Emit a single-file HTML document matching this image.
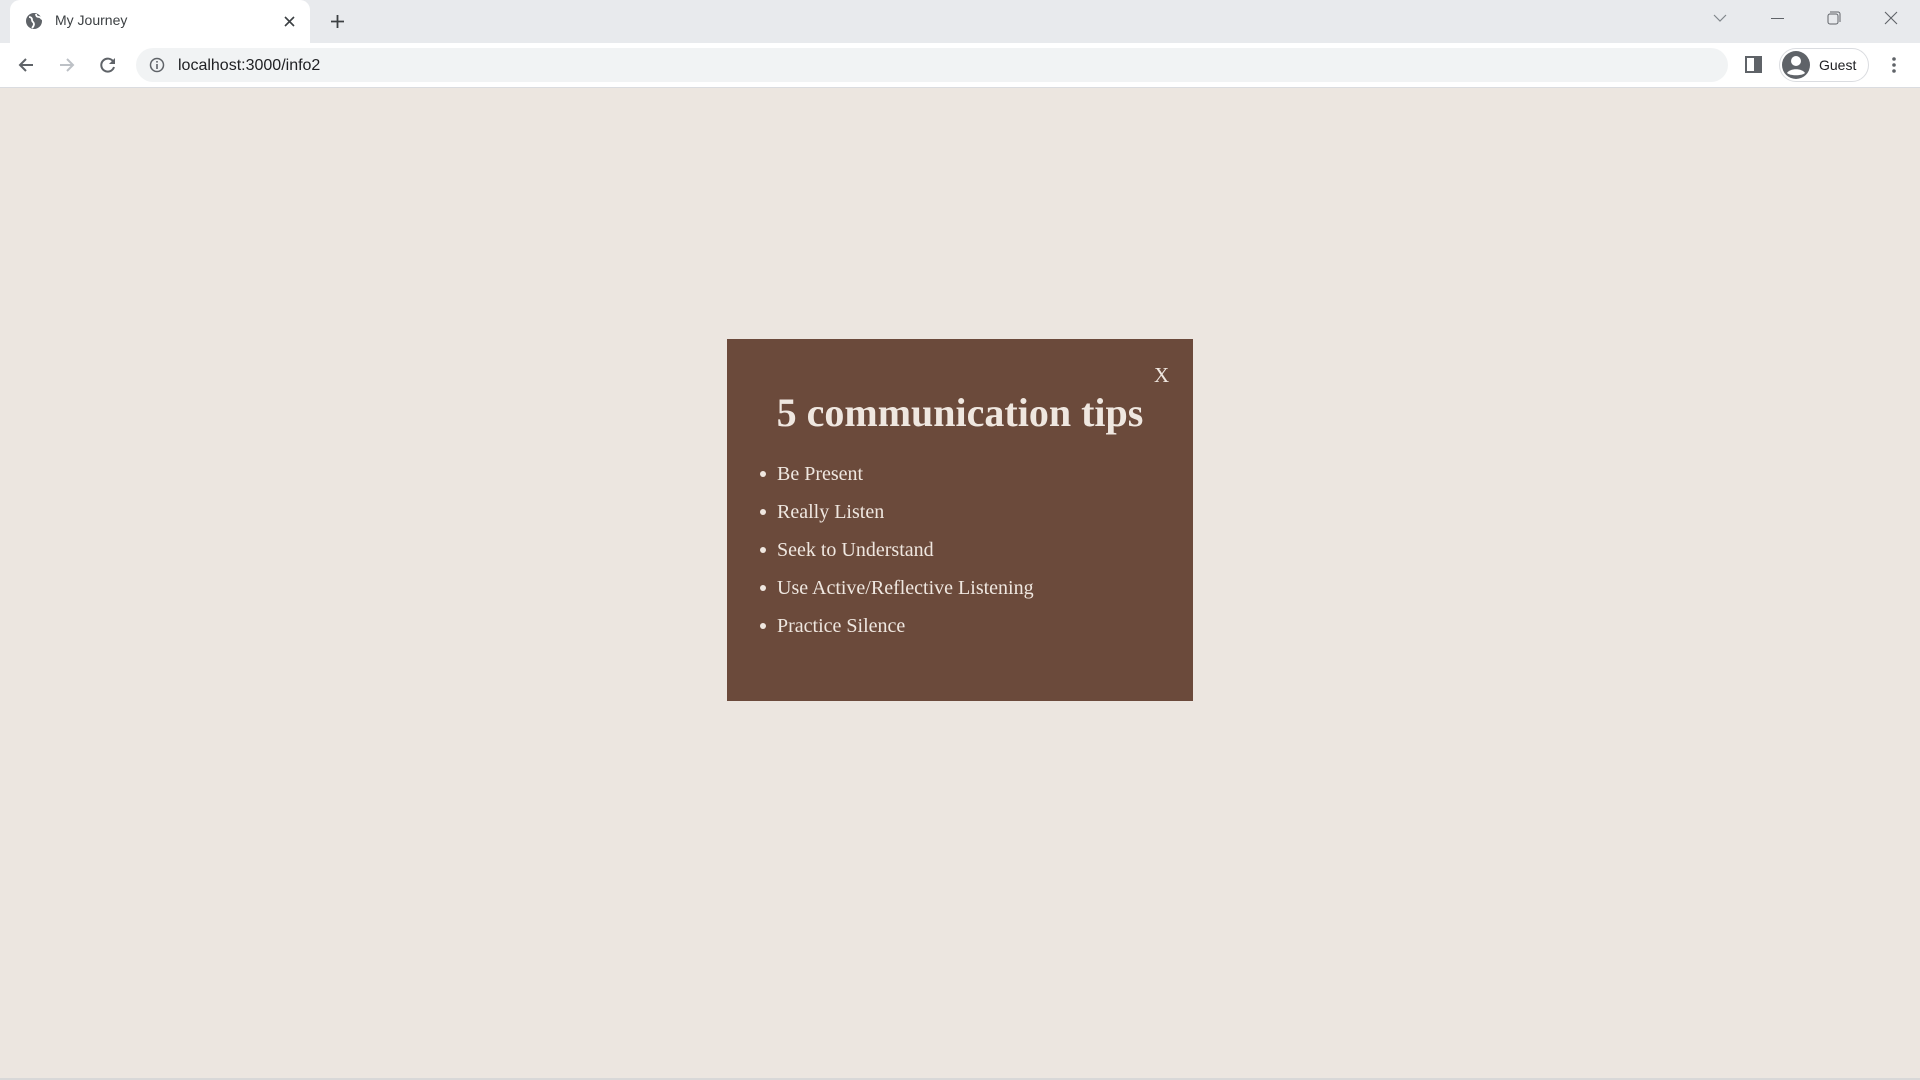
<!DOCTYPE html>
<html><head><meta charset="utf-8">
<style>
*{margin:0;padding:0;box-sizing:border-box}
html,body{width:1920px;height:1080px;overflow:hidden;background:#ece6e0;font-family:"Liberation Sans",sans-serif}
#tabbar{position:absolute;left:0;top:0;width:1920px;height:43px;background:#e8eaed}
#tab{position:absolute;left:10px;top:0;width:300px;height:43px;background:#fff;border-radius:10px 10px 0 0}
#tab .t{position:absolute;left:45px;top:12px;font-size:14px;color:#3c4043}
#toolbar{position:absolute;left:0;top:43px;width:1920px;height:45px;background:#fff;border-bottom:1px solid #dadce0}
#omni{position:absolute;left:136px;top:5px;width:1592px;height:34px;background:#f1f3f4;border-radius:17px}
#omni .u{position:absolute;left:42px;top:9px;font-size:16px;color:#202124}
#guest{position:absolute;left:1779px;top:5px;width:90px;height:34px;border:1px solid #dadce0;border-radius:17px}
#guest span{position:absolute;left:39px;top:8px;font-size:14px;color:#202124}
#bottom{position:absolute;left:0;top:1078px;width:1920px;height:2px;background:#d8d8d8}
#modal{position:absolute;left:727px;top:339px;width:466px;height:362px;background:#6b4a3b;color:#efe7e0;font-family:"Liberation Serif",serif}
#modal h1{position:absolute;left:0;width:466px;top:50px;text-align:center;font-size:40px;font-weight:bold;line-height:48px}
#close{position:absolute;left:427px;top:24px;font-size:21px}
#modal ul{position:absolute;left:50px;top:116px;list-style:none}
#modal li{font-size:20px;line-height:38px;position:relative}
#modal li:before{content:"";position:absolute;left:-17px;top:16px;width:6px;height:6px;border-radius:50%;background:#efe7e0}
</style></head><body>
<div id="tabbar">
 <div id="tab">
  <svg style="position:absolute;left:15px;top:12px" width="18" height="18" viewBox="0 0 18 18"><circle cx="9" cy="9" r="8" fill="#5f6368"/><path d="M4 5c2 0 3 1 3 3s2 2 2 4-1 3-2 4M11 2c0 2 1 3 3 3s2 2 3 2" stroke="#fff" stroke-width="1.8" fill="none"/></svg>
  <span class="t">My Journey</span>
  <svg style="position:absolute;left:274px;top:16px" width="11" height="11" viewBox="0 0 11 11"><path d="M1 1L10 10M10 1L1 10" stroke="#3c4043" stroke-width="1.6"/></svg>
 </div>
 <svg style="position:absolute;left:330px;top:14px" width="15" height="15" viewBox="0 0 15 15"><path d="M7.5 1V14M1 7.5H14" stroke="#3c4043" stroke-width="1.8"/></svg>
 <svg style="position:absolute;left:1713px;top:14px" width="14" height="8" viewBox="0 0 14 8"><path d="M1 1L7 7L13 1" stroke="#80868b" stroke-width="1.2" fill="none"/></svg>
 <div style="position:absolute;left:1771px;top:18px;width:13px;height:1px;background:#5f6368"></div>
 <svg style="position:absolute;left:1827px;top:11px" width="14" height="14" viewBox="0 0 14 14"><rect x="1" y="3" width="10" height="10" rx="2" stroke="#5f6368" fill="none"/><path d="M3 1H11a2 2 0 0 1 2 2V11" stroke="#5f6368" fill="none"/></svg>
 <svg style="position:absolute;left:1884px;top:11px" width="14" height="14" viewBox="0 0 14 14"><path d="M1 1L13 13M13 1L1 13" stroke="#5f6368" stroke-width="1.1"/></svg>
</div>
<div id="toolbar">
 <svg style="position:absolute;left:17px;top:13px" width="18" height="18" viewBox="0 0 18 18"><path d="M16 9H3M9 3L3 9L9 15" stroke="#5f6368" stroke-width="2" fill="none"/></svg>
 <svg style="position:absolute;left:58px;top:13px" width="18" height="18" viewBox="0 0 18 18"><path d="M2 9H15M9 3L15 9L9 15" stroke="#bdc1c6" stroke-width="2" fill="none"/></svg>
 <svg style="position:absolute;left:99px;top:13px" width="18" height="18" viewBox="0 0 18 18"><path d="M14.5 6A6.5 6.5 0 1 0 15 11" stroke="#5f6368" stroke-width="2" fill="none"/><path d="M16 2V8H10Z" fill="#5f6368"/></svg>
 <div id="omni">
  <svg style="position:absolute;left:13px;top:9px" width="16" height="16" viewBox="0 0 16 16"><circle cx="8" cy="8" r="6.5" stroke="#5f6368" stroke-width="1.5" fill="none"/><rect x="7.2" y="7" width="1.6" height="5" fill="#5f6368"/><rect x="7.2" y="4" width="1.6" height="1.6" fill="#5f6368"/></svg>
  <span class="u">localhost:3000/info2</span>
 </div>
 <svg style="position:absolute;left:1745px;top:13px" width="17" height="17" viewBox="0 0 17 17"><rect x="1" y="1" width="15" height="15" stroke="#5f6368" stroke-width="2" fill="none"/><rect x="9" y="1" width="7" height="15" fill="#5f6368"/></svg>
 <div id="guest">
  <svg style="position:absolute;left:2px;top:2px" width="28" height="28" viewBox="0 0 28 28"><circle cx="14" cy="14" r="14" fill="#5f6368"/><circle cx="14" cy="10" r="5" fill="#fff"/><path d="M5 22c3-5 15-5 18 0c-3 3-15 3-18 0z" fill="#fff"/></svg>
  <span>Guest</span>
 </div>
 <svg style="position:absolute;left:1891px;top:13px" width="6" height="18" viewBox="0 0 6 18"><circle cx="3" cy="3" r="1.8" fill="#5f6368"/><circle cx="3" cy="9" r="1.8" fill="#5f6368"/><circle cx="3" cy="15" r="1.8" fill="#5f6368"/></svg>
</div>
<div id="modal">
 <div id="close">X</div>
 <h1>5 communication tips</h1>
 <ul>
  <li>Be Present</li>
  <li>Really Listen</li>
  <li>Seek to Understand</li>
  <li>Use Active/Reflective Listening</li>
  <li>Practice Silence</li>
 </ul>
</div>
<div id="bottom"></div>
</body></html>
